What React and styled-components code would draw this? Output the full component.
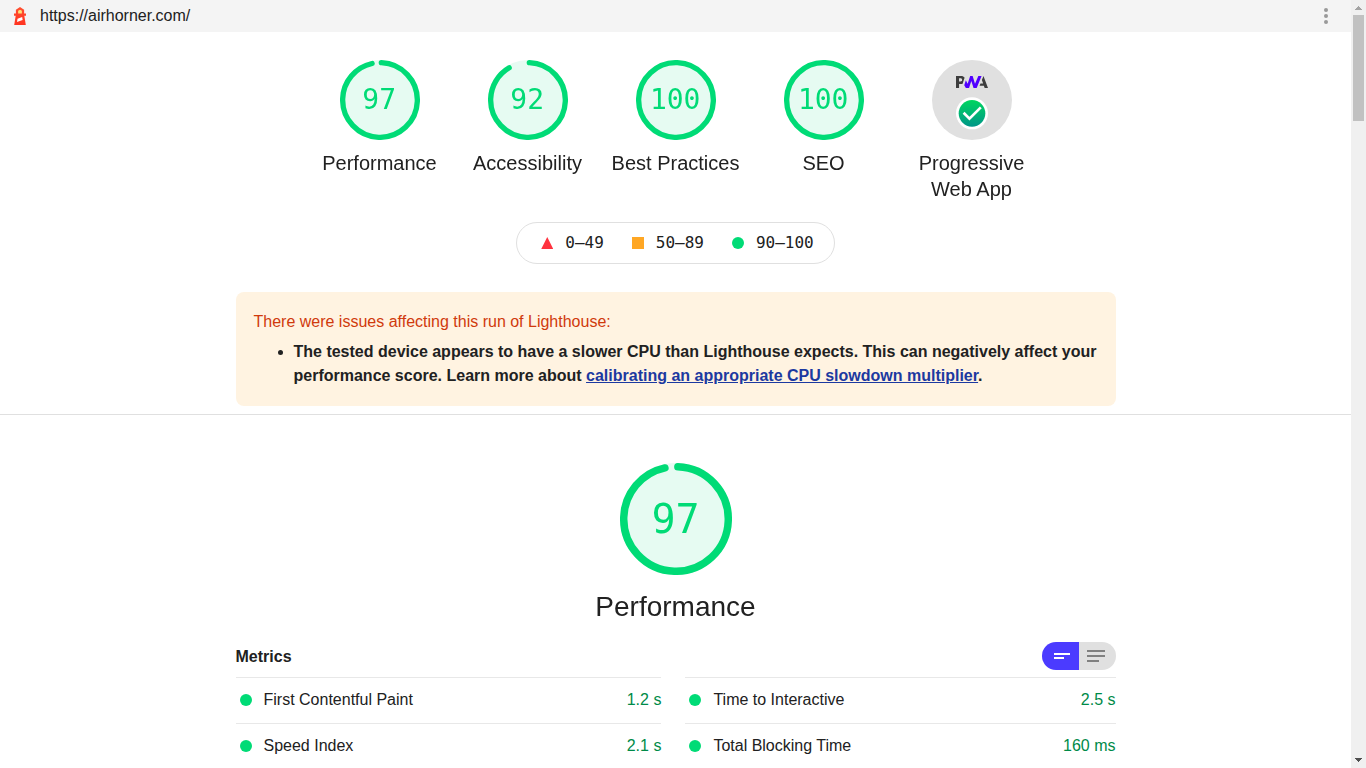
import React from 'react';
import styled, { createGlobalStyle, css } from 'styled-components';

const GlobalStyle = createGlobalStyle`
  * { box-sizing: border-box; }
  body {
    margin: 0;
    background: #fff;
    color: #212121;
    font: 16px/24px "Liberation Sans", Arial, sans-serif;
    overflow: hidden;
  }
`;

const mono = '"DejaVu Sans Mono", monospace';
const PASS = '#00db76';

const Window = styled.div`
  display: flex;
  height: 768px;
  overflow: hidden;
`;

const Report = styled.div`
  flex: 1;
  min-width: 0;
`;

const Topbar = styled.header`
  display: flex;
  align-items: center;
  height: 32px;
  padding: 0 13px 0 8px;
  background: #f4f4f4;
`;

const Url = styled.span`
  flex: 1;
  margin-left: 8px;
`;

const Header = styled.section`
  display: flex;
  flex-direction: column;
  align-items: center;
  height: 383px;
  padding-top: 28px;
  border-bottom: 1px solid #e0e0e0;
`;

const Scores = styled.div`
  display: flex;
  justify-content: center;
  width: 100%;
  will-change: transform;
`;

const Score = styled.div`
  display: flex;
  flex-direction: column;
  align-items: center;
  width: ${(p) => (p.$large ? 200 : 148)}px;
`;

const Dial = styled.div`
  display: grid;
  place-items: center;
  width: ${(p) => p.$size}px;
  height: ${(p) => p.$size}px;
  > * { grid-area: 1 / 1; }
`;

const Percentage = styled.span`
  margin-right: ${(p) => (p.$large ? 0 : 0.6)}px;
  color: ${PASS};
  font: ${(p) => (p.$large ? 40 : 28)}px/1 ${mono};
`;

const ScoreLabel = styled.div`
  margin-top: ${(p) => (p.$large ? 14 : 10)}px;
  font-size: ${(p) => (p.$large ? 28 : 20)}px;
  line-height: ${(p) => (p.$large ? 36 : 26)}px;
  width: ${(p) => (p.$large ? 'auto' : '130px')};
  white-space: ${(p) => (p.$wrap ? 'normal' : 'nowrap')};
  text-align: center;
`;

const Legend = styled.div`
  display: flex;
  align-items: center;
  gap: 28px;
  height: 42px;
  margin-top: 20px;
  padding: 0 20px 0 24px;
  border: 1px solid #e0e0e0;
  border-radius: 21px;
  font: 16px/24px ${mono};
`;

const LegendItem = styled.span`
  display: flex;
  align-items: center;
  gap: 12px;
`;

const shapes = {
  fail: css`background: #ff333f; clip-path: polygon(50% 0, 100% 100%, 0 100%);`,
  average: css`background: #ffa724;`,
  pass: css`background: ${PASS}; border-radius: 50%;`,
};

const Mark = styled.i`
  width: 12px;
  height: 12px;
  ${(p) => shapes[p.$rating]}
`;

const Warning = styled.div`
  width: 880px;
  height: 114px;
  margin-top: 28px;
  padding: 18px;
  border-radius: 8px;
  background: #fff3e1;
`;

const WarningTitle = styled.p`
  margin: 0;
  color: #d03a0c;
`;

const WarningList = styled.ul`
  margin: 6px 0 0;
  padding-left: 40px;
  font-weight: bold;
`;

const Link = styled.a`
  color: #1c39a0;
  text-decoration: underline;
`;

const Category = styled.section`
  display: flex;
  flex-direction: column;
  align-items: center;
  padding-top: 48px;
`;

const MetricsHeader = styled.div`
  display: flex;
  align-items: center;
  justify-content: space-between;
  width: 880px;
  height: 28px;
  margin: 17px 0 7px;
  font-weight: bold;
`;

const MetricsTitle = styled.span`
  padding-top: 2px;
`;

const Toggle = styled.div`
  display: flex;
  width: 74px;
  height: 28px;
  border-radius: 14px;
  overflow: hidden;
`;

const ToggleHalf = styled.span`
  display: flex;
  flex: 1;
  background: ${(p) => (p.$active ? '#4b3bff' : '#e0e0e0')};
`;

const Metrics = styled.div`
  display: grid;
  grid-template-columns: 425.9px 1fr;
  column-gap: 24px;
  width: 880px;
`;

const Metric = styled.div`
  display: flex;
  align-items: center;
  height: 46px;
  padding: 0 0 1px 4px;
  border-top: 1px solid #e8e8e8;
`;

const MetricName = styled.span`
  flex: 1;
  margin-left: 12px;
`;

const MetricValue = styled.span`
  color: #008a48;
`;

const Scrollbar = styled.div`
  display: flex;
  flex-direction: column;
  align-items: center;
  width: 15px;
  background: #f0f0f0;
`;

const Thumb = styled.div`
  width: 11px;
  height: 106px;
  margin: 5px 0 auto;
  background: #c1c1c1;
`;

const Arrow = styled.svg`
  display: block;
  width: 7px;
  height: 4px;
  margin: ${(p) => (p.$down ? '0 0 6px' : '6px 0 0')};
  fill: ${(p) => (p.$down ? '#505050' : '#a3a3a3')};
`;

const LighthouseLogo = () => (
  <svg width="24" height="24" viewBox="0 0 24 24">
    <defs>
      <linearGradient id="tower" x1="0" y1="0" x2="0" y2="1">
        <stop offset="0" stopColor="#ff5030" />
        <stop offset="1" stopColor="#ff3320" />
      </linearGradient>
    </defs>
    <path fill="url(#tower)" d="M12 3l4.125 2.625v3.75H18v2.25h-1.688l1.5 9.375H6.188l1.5-9.375H6v-2.25h1.875V5.648L12 3z" />
    <path fill="#fff" d="M14.201 12.938L9.54 14.633 9 18.028l5.625-2.062z" />
    <path fill="#ffe176" d="M13.875 9.375v-2.56l-1.87-1.19-1.88 1.207v2.543z" />
  </svg>
);

const Kebab = () => (
  <svg width="24" height="24" viewBox="0 0 24 24" fill="#999">
    <circle cx="12" cy="6" r="2" />
    <circle cx="12" cy="12" r="2" />
    <circle cx="12" cy="18" r="2" />
  </svg>
);

const CIRCUMFERENCE = 2 * Math.PI * 56;

function Gauge({ value, label, large }) {
  const size = large ? 112 : 80;
  const arc = value === 100 ? CIRCUMFERENCE : (value / 100) * CIRCUMFERENCE - 4;
  return (
    <Score $large={large}>
      <Dial $size={size}>
        <svg width={size} height={size} viewBox="0 0 120 120">
          <circle cx="60" cy="60" r="60" fill="#e6fbf2" />
          <circle
            cx="60"
            cy="60"
            r="56"
            fill="none"
            stroke={PASS}
            strokeWidth="8"
            strokeLinecap="round"
            strokeDasharray={`${arc} ${CIRCUMFERENCE}`}
            transform="rotate(-87.954 60 60)"
          />
        </svg>
        <Percentage $large={large}>{value}</Percentage>
      </Dial>
      <ScoreLabel $large={large}>{label}</ScoreLabel>
    </Score>
  );
}

const PwaBadge = () => (
  <Score>
    <Dial $size={80}>
      <svg width="80" height="80" viewBox="0 0 60 60">
        <defs>
          <linearGradient id="badge" x1="0" y1="0" x2="0" y2="1">
            <stop offset="0" stopColor="#00d65f" />
            <stop offset="1" stopColor="#009688" />
          </linearGradient>
        </defs>
        <circle cx="30" cy="30" r="30" fill="#e0e0e0" />
        <path fill="#3d3d3d" d="M35.66 19.39l.7-1.75h2L37.4 15 38.6 12l3.4 9h-2.51l-.58-1.61z" />
        <path fill="#5000ff" d="M33.52 21l3.65-9h-2.42l-2.5 5.82L30.5 12h-1.86l-1.9 5.82-1.35-2.65-1.21 3.72L25.4 21h2.38l1.72-5.2 1.64 5.2z" />
        <path fill="#3d3d3d" d="M20.3 17.91h1.48c.45 0 .85-.05 1.2-.15l.39-1.18 1.07-3.3a2.64 2.64 0 0 0-.28-.37c-.55-.6-1.36-.91-2.42-.91H18v9h2.3V17.9zm1.96-3.84c.22.22.33.5.33.87 0 .36-.1.65-.29.87-.2.23-.59.35-1.15.35h-.86v-2.41h.87c.52 0 .89.1 1.1.32z" />
        <circle cx="30" cy="40" r="12" fill="#fff" />
        <circle cx="30" cy="40" r="10" fill="url(#badge)" />
        <path fill="none" stroke="#fff" strokeWidth="2" d="M23.7 39.6l4.4 4.4 8.5-8.5" />
      </svg>
    </Dial>
    <ScoreLabel $wrap>Progressive Web App</ScoreLabel>
  </Score>
);

const scores = [
  [97, 'Performance'],
  [92, 'Accessibility'],
  [100, 'Best Practices'],
  [100, 'SEO'],
];

const legend = [
  ['fail', '0–49'],
  ['average', '50–89'],
  ['pass', '90–100'],
];

const metrics = [
  ['First Contentful Paint', '1.2 s'],
  ['Time to Interactive', '2.5 s'],
  ['Speed Index', '2.1 s'],
  ['Total Blocking Time', '160 ms'],
];

export default function App() {
  return (
    <Window>
      <GlobalStyle />
      <Report>
        <Topbar>
          <LighthouseLogo />
          <Url>https://airhorner.com/</Url>
          <Kebab />
        </Topbar>
        <Header>
          <Scores>
            {scores.map(([value, label]) => (
              <Gauge key={label} value={value} label={label} />
            ))}
            <PwaBadge />
          </Scores>
          <Legend>
            {legend.map(([rating, range]) => (
              <LegendItem key={rating}>
                <Mark $rating={rating} />
                {range}
              </LegendItem>
            ))}
          </Legend>
          <Warning>
            <WarningTitle>There were issues affecting this run of Lighthouse:</WarningTitle>
            <WarningList>
              <li>
                The tested device appears to have a slower CPU than Lighthouse expects. This can
                negatively affect your performance score. Learn more about{' '}
                <Link>calibrating an appropriate CPU slowdown multiplier</Link>.
              </li>
            </WarningList>
          </Warning>
        </Header>
        <Category>
          <Scores>
            <Gauge value={97} label="Performance" large />
          </Scores>
          <MetricsHeader>
            <MetricsTitle>Metrics</MetricsTitle>
            <Toggle>
              <ToggleHalf $active>
                <svg width="37" height="28" stroke="#fff" strokeWidth="2">
                  <path d="M12 12h16M12 16h10" />
                </svg>
              </ToggleHalf>
              <ToggleHalf>
                <svg width="37" height="28" stroke="#808080" strokeWidth="2">
                  <path d="M8 9h18M8 14h18M8 19h12" />
                </svg>
              </ToggleHalf>
            </Toggle>
          </MetricsHeader>
          <Metrics>
            {metrics.map(([name, value]) => (
              <Metric key={name}>
                <Mark $rating="pass" />
                <MetricName>{name}</MetricName>
                <MetricValue>{value}</MetricValue>
              </Metric>
            ))}
          </Metrics>
        </Category>
      </Report>
      <Scrollbar>
        <Arrow viewBox="0 0 7 4"><path d="M3 0h1v1h1v1h1v1h1v1H0V3h1V2h1V1h1z" /></Arrow>
        <Thumb />
        <Arrow $down viewBox="0 0 7 4"><path d="M3 4h1V3h1V2h1V1h1V0H0v1h1v1h1v1h1z" /></Arrow>
      </Scrollbar>
    </Window>
  );
}
